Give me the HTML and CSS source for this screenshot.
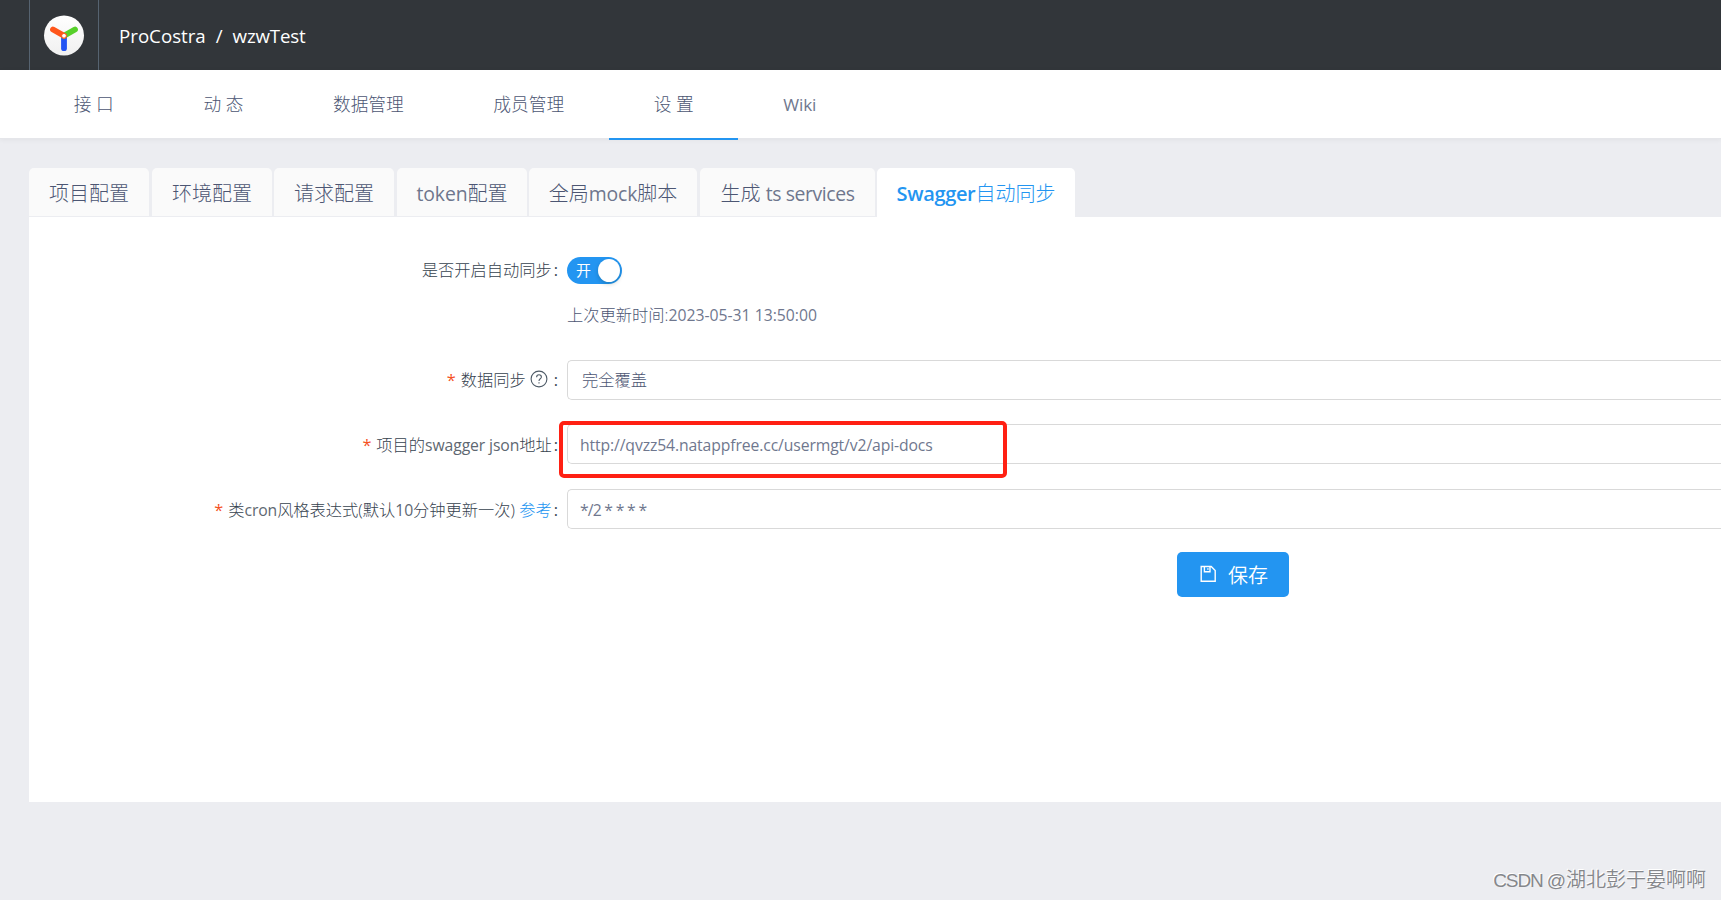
FILE: index.html
```html
<!DOCTYPE html>
<html lang="zh-CN">
<head>
<meta charset="utf-8">
<title>ProCostra / wzwTest</title>
<link rel="stylesheet" href="styles.css">
</head>
<body>
<header class="topbar">
  <a class="logo">
    <svg width="40" height="40" viewBox="0 0 40 40">
      <defs><linearGradient id="disc" x1="0" y1="0" x2="0" y2="1"><stop offset="0" stop-color="#fff"/><stop offset="1" stop-color="#f0f0f0"/></linearGradient></defs>
      <circle cx="20" cy="20.4" r="20" fill="url(#disc)"/>
      <g stroke-width="5.8" stroke-linecap="round">
        <path d="M20 20.8V33.2" stroke="#2254f4"/>
        <path d="M20 20.8L31 14.5" stroke="#57d02a"/>
        <path d="M20 20.8L9 14.5" stroke="#ff561b"/>
      </g>
      <circle cx="20" cy="20.8" r="2.4" fill="#fff" stroke="#ff561b" stroke-width="1"/>
    </svg>
  </a>
  <div class="crumbs"><span class="group">ProCostra</span><span class="slash">/</span><span class="project">wzwTest</span></div>
</header>
<nav class="nav">
  <a class="nav-item">接 口</a>
  <a class="nav-item">动 态</a>
  <a class="nav-item">数据管理</a>
  <a class="nav-item">成员管理</a>
  <a class="nav-item active">设 置</a>
  <a class="nav-item"><span class="latin">Wiki</span></a>
</nav>
<main class="page">
  <div class="tabs">
    <a class="tab">项目配置</a>
    <a class="tab">环境配置</a>
    <a class="tab wide-gap">请求配置</a>
    <a class="tab token"><span class="latin">token</span>配置</a>
    <a class="tab mock wide-gap">全局<span class="latin">mock</span>脚本</a>
    <a class="tab services">生成 <span class="latin">ts services</span></a>
    <a class="tab current"><b>Swagger</b>自动同步</a>
  </div>
  <section class="panel">
    <div class="row row-switch">
      <div class="label">是否开启自动同步<i>:</i></div>
      <div class="field"><span class="switch">开</span></div>
    </div>
    <div class="row row-time">
      <div class="label"></div>
      <div class="field time">上次更新时间:<span class="latin stamp">2023-05-31 13:50:00</span></div>
    </div>
    <div class="row row-input row-mode">
      <div class="label"><em>*</em>数据同步<svg class="help" width="18" height="18" viewBox="0 0 18 18" fill="none" stroke="#4d5a66" stroke-width="1.1"><circle cx="9" cy="9" r="7.9"/><path d="M6.6 7.2C6.6 5.7 7.6 4.8 9 4.8S11.4 5.7 11.4 7C11.4 8.8 9 8.8 9 10.9M9 12.2V13.5"/></svg><i class="loose">:</i></div>
      <div class="field"><div class="input select">完全覆盖</div></div>
    </div>
    <div class="row row-input">
      <div class="label"><em>*</em>项目的<span class="latin">swagger json</span>地址<i>:</i></div>
      <div class="field"><div class="input"><span class="latin">http://qvzz54.natappfree.cc/usermgt/v2/api-docs</span></div><div class="marker"></div></div>
    </div>
    <div class="row row-input">
      <div class="label"><em>*</em>类<span class="latin">cron</span>风格表达式(默认<span class="latin">10</span>分钟更新一次) <a class="link">参考</a><i>:</i></div>
      <div class="field"><div class="input"><span class="latin cron">*/2 * * * *</span></div></div>
    </div>
    <div class="actions">
      <button class="save"><svg width="17" height="18" viewBox="0 0 17 18" fill="none" stroke="#fff" stroke-width="1.4"><path d="M1.2 1.5H11.2L15.2 5.5V16.3H1.2ZM4.4 1.5V6.8H10V1.5M7.9 3.2V4.8"/></svg>保存</button>
    </div>
  </section>
</main>
<div class="watermark"><span class="handle">CSDN @</span>湖北彭于晏啊啊</div>
</body>
</html>
```
FILE: styles.css
```css
* { box-sizing: border-box; }
body {
  margin: 0;
  height: 900px;
  overflow: hidden;
  background: #ecedf1;
  color: #4c5673;
  font-family: "Open Sans", "Noto Sans CJK SC", sans-serif;
  font-size: 16.25px;
  font-weight: 300;
  position: relative;
}
.latin { font-weight: 400; font-size: .97em; letter-spacing: -.12px; opacity: .8; }
.latin.stamp { letter-spacing: 0; }
.topbar {
  height: 70px;
  padding-left: 29px;
  background: #32363a;
  display: flex;
}
.logo {
  width: 70px;
  border-left: 1px solid #566370;
  border-right: 1px solid #566370;
  padding: 15px 0 0 14px;
}
.logo svg { display: block; overflow: visible; }
.crumbs {
  display: flex;
  padding-left: 20px;
  line-height: 72px;
  font-size: 18.7px;
  font-weight: 400;
  color: #fff;
  white-space: pre;
}
.slash { margin: 0 10px; }
.project { letter-spacing: -.15px; }
.nav {
  height: 69px;
  padding-left: 29px;
  background: #fff;
  border-bottom: 1px solid #e5e6ea;
  box-shadow: 0 1px 5px rgba(0, 0, 0, .05);
  display: flex;
}
.nav-item {
  height: 70px;
  padding: 0 44.8px;
  line-height: 69.6px;
  font-size: 17.7px;
}
.nav-item.active { border-bottom: 2px solid #2395f1; }
.page { padding: 29px 0 0 29px; }
.tabs { display: flex; height: 49px; gap: 2px; }
.tab {
  width: 120px;
  height: 48px;
  border-radius: 5px 5px 0 0;
  background: #fafafa;
  line-height: 51px;
  font-size: 20px;
  text-align: center;
  white-space: nowrap;
}
.tab:first-child, .wide-gap { margin-right: 1px; }
.tab.token { width: 130px; }
.tab.mock { width: 168px; }
.tab.services { width: 175px; }
.tab.services .latin { letter-spacing: -.4px; }
.tab.current { width: 198px; height: 49px; background: #fff; color: #2395f1; }
.tab b { font-weight: 600; letter-spacing: -.35px; }
.panel { height: 585px; background: #fff; padding-top: 33px; }
.row { display: grid; grid-template-columns: 530px 1fr; column-gap: 8px; }
.label {
  text-align: right;
  line-height: 41px;
  color: #36424e;
  white-space: nowrap;
}
.label i { font-style: normal; font-weight: 400; margin: 0 1px 0 2px; }
.label .loose { margin-left: 6px; }
.label em { font-style: normal; color: #f5511e; font-weight: 400; margin-right: 5px; }
.link { color: #2395f1; }
.help { vertical-align: -2px; margin-left: 4px; }
.field { position: relative; }
.row-switch { height: 45px; }
.switch {
  display: block;
  width: 55px;
  height: 27px;
  margin-top: 7px;
  padding-left: 9px;
  border-radius: 14px;
  background: #2395f1;
  color: #fff;
  font-size: 15px;
  font-weight: 400;
  line-height: 26px;
  position: relative;
}
.switch::after {
  content: "";
  position: absolute;
  right: 2px;
  top: 2px;
  width: 22px;
  height: 23px;
  border-radius: 50%;
  background: #fff;
  box-shadow: 0 2px 4px rgba(0, 35, 11, .2);
}
.row-time { height: 65px; line-height: 40px; }
.row-input { height: 64.4px; }
.row-input .label { line-height: 42px; }
.input {
  height: 40px;
  padding-left: 12px;
  border: 1px solid #d9d9d9;
  border-right: 0;
  border-radius: 5px 0 0 5px;
  line-height: 40px;
}
.row-mode .label { line-height: 41px; }
.select { padding-left: 14px; line-height: 39px; }
.latin.cron { letter-spacing: -.9px; word-spacing: .4px; }
.marker {
  position: absolute;
  left: -8px;
  top: -3.4px;
  width: 448px;
  height: 57px;
  border: 4px solid #ff2013;
  border-radius: 5px;
}
.actions { padding-left: 1148px; margin-top: -1.5px; }
.save {
  width: 112px;
  height: 45px;
  border: 0;
  border-radius: 5px;
  background: #2395f1;
  color: #fff;
  font: inherit;
  font-size: 20px;
  font-weight: 350;
  display: flex;
  align-items: center;
  justify-content: center;
  gap: 11px;
  padding: 0 0 0 2px;
}
.watermark {
  position: absolute;
  right: 15px;
  bottom: 4px;
  font-family: "Liberation Sans", "Noto Sans CJK SC", sans-serif;
  font-size: 20px;
  font-weight: 350;
  line-height: 30px;
  color: #85878b;
  text-shadow: -1px -1px 0 #fff;
}
.handle { font-size: 19px; letter-spacing: -1.1px; margin-right: 1px; }
```
